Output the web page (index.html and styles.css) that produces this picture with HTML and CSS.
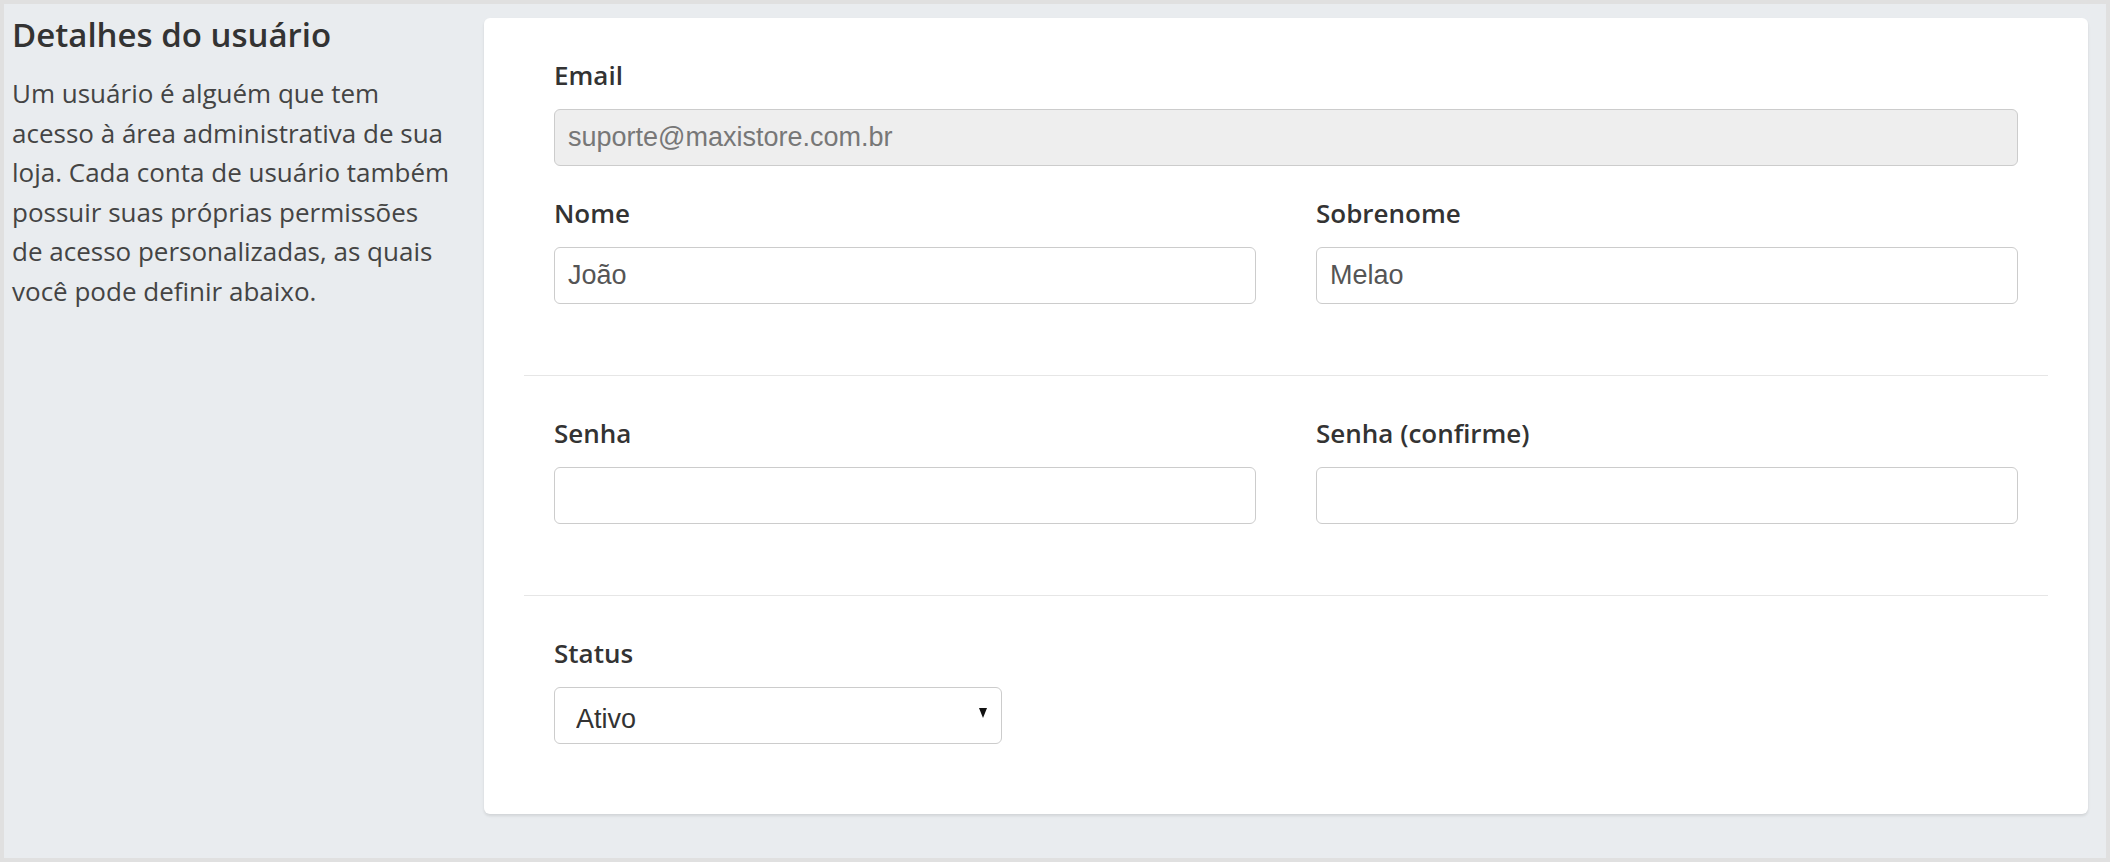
FILE: index.html
```html
<!DOCTYPE html>
<html lang="pt-BR">

<head>
  <meta charset="UTF-8">
  <meta name="viewport" content="width=device-width, initial-scale=1.0">
  <title>Detalhes do usuário</title>
  <link rel="stylesheet" href="styles.css">
</head>

<body>
  <div class="page">
    <aside class="intro">
      <h2>Detalhes do usuário</h2>
      <p>Um usuário é alguém que tem acesso à área administrativa de sua loja. Cada conta de usuário também possuir suas próprias permissões de acesso personalizadas, as quais você pode definir abaixo.</p>
    </aside>

    <div class="card">
      <div class="form-section">
        <div class="field field-email">
          <label for="email">Email</label>
          <input type="text" id="email" value="suporte@maxistore.com.br" disabled>
        </div>
        <div class="row">
          <div class="field">
            <label for="firstName">Nome</label>
            <input type="text" id="firstName" value="João">
          </div>
          <div class="field">
            <label for="lastName">Sobrenome</label>
            <input type="text" id="lastName" value="Melao">
          </div>
        </div>
      </div>

      <div class="form-section">
        <div class="row">
          <div class="field">
            <label for="password">Senha</label>
            <input type="password" id="password">
          </div>
          <div class="field">
            <label for="passwordConfirm">Senha (confirme)</label>
            <input type="password" id="passwordConfirm">
          </div>
        </div>
      </div>

      <div class="form-section last">
        <div class="row thirds">
          <div class="field">
            <label for="status">Status</label>
            <div class="select-wrap">
              <select id="status">
                <option>Ativo</option>
                <option>Inativo</option>
              </select>
            </div>
          </div>
        </div>
      </div>
    </div>
  </div>
</body>

</html>
```

FILE: styles.css
```css
/* Base */
html,
body {
  height: 100%;
}

body {
  margin: 0;
  box-sizing: border-box;
  height: 862px;
  border: 4px solid #e0e0e0;
  background-color: #e9ecef;
  font-family: "Open Sans", Lato, Arial, sans-serif;
  color: #333;
}

.page {
  display: flex;
  align-items: flex-start;
  gap: 31px;
  padding: 14px 18px 0 8px;
}

/* Left description column */
.intro {
  width: 441px;
  flex-shrink: 0;
}

.intro h2 {
  margin: 0;
  font-size: 33px;
  line-height: 34px;
  font-weight: 600;
  color: #333;
}

.intro p {
  margin: 22px 0 0;
  font-size: 26px;
  line-height: 39.5px;
  color: #444;
}

/* Card with the form */
.card {
  flex: 1;
  background-color: #fff;
  border-radius: 6px;
  box-shadow: 0 2px 3px rgba(0, 0, 0, 0.1);
  padding: 0 40px;
}

.form-section {
  padding: 42px 30px 71px;
}

.form-section + .form-section {
  border-top: 1px solid #e6e6e6;
}

.form-section.last {
  padding-bottom: 70px;
}

.row {
  display: grid;
  grid-template-columns: 1fr 1fr;
  gap: 60px;
}

.row.thirds {
  grid-template-columns: repeat(3, 1fr);
}

.field-email {
  margin-bottom: 32px;
}

.field label {
  display: block;
  margin-bottom: 19px;
  font-size: 26px;
  line-height: 30px;
  font-weight: 600;
  color: #333;
}

.field input,
.field select {
  display: block;
  box-sizing: border-box;
  width: 100%;
  height: 57px;
  padding: 0 13px;
  border: 1px solid #ccc;
  border-radius: 6px;
  background-color: #fff;
  font-family: "Liberation Sans", Arial, sans-serif;
  font-size: 27px;
  color: #555;
  outline: none;
}

.field input:disabled {
  background-color: #eee;
  color: #777;
}

/* Status dropdown */
.select-wrap {
  position: relative;
}

.field select {
  -webkit-appearance: none;
  appearance: none;
  padding: 6px 21px 0;
  color: #333;
}

.select-wrap::after {
  content: "";
  position: absolute;
  right: 15px;
  top: 21px;
  border-left: 4px solid transparent;
  border-right: 4px solid transparent;
  border-top: 10px solid #111;
  pointer-events: none;
}
```
